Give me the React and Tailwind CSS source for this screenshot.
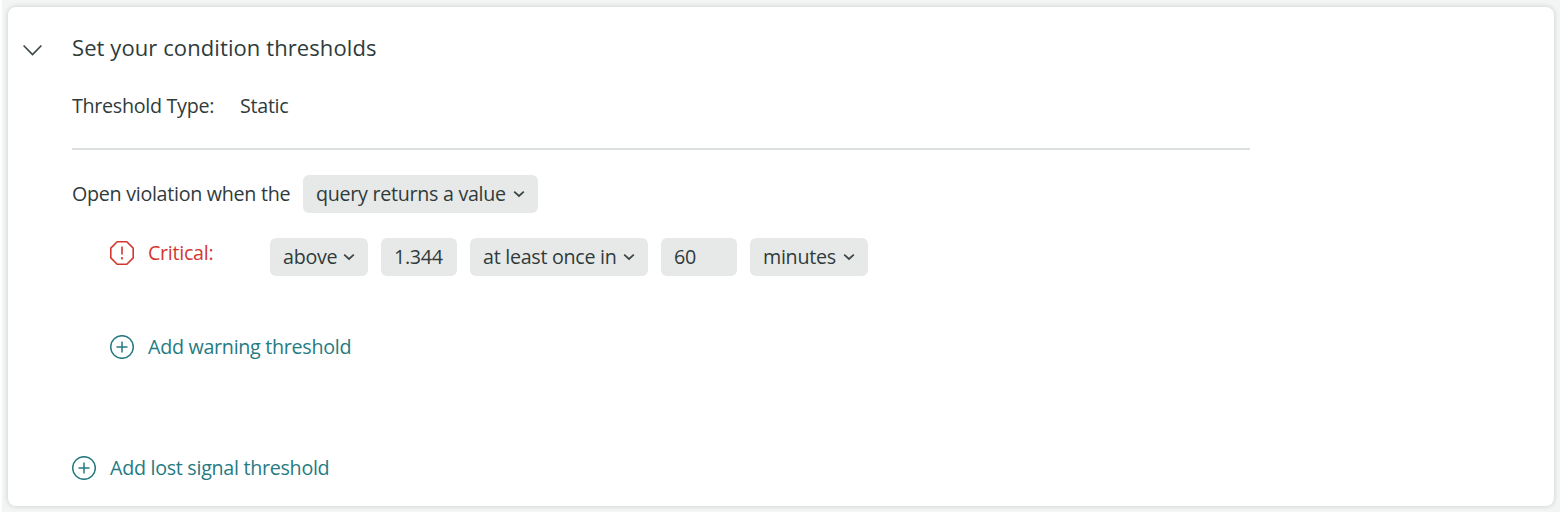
function Caret() {
  return (
    <svg className="h-2 w-3 shrink-0" viewBox="0 0 12 8" fill="none" stroke="#3a4444" strokeWidth="1.7">
      <path d="M1.200 1.700 6 6l4.800-4.300" />
    </svg>
  );
}

function Field({ text, width, caret }) {
  return (
    <div className={`flex h-[38px] shrink-0 items-center justify-between rounded-md bg-[#e7e9e8] pr-[13px] pl-[13px] ${width}`}>
      <span className="-mt-px">{text}</span>
      {caret && <Caret />}
    </div>
  );
}

function AddLink({ text }) {
  return (
    <button className="flex h-6 items-center gap-3.5 text-[#267a82]">
      <svg className="size-6 shrink-0" viewBox="0 0 24 24" fill="none" stroke="currentColor" strokeWidth="1.5">
        <circle cx="12" cy="12" r="11.300" />
        <path d="M12 6.500v11M6.500 12h11" />
      </svg>
      <span>{text}</span>
    </button>
  );
}

export default function App() {
  return (
    <div className="h-[512px] w-[1560px] overflow-hidden border-l-2 border-white bg-[#f3f5f5] pt-[7px] pl-1.5 font-['Open_Sans',sans-serif] text-[19.7px] leading-6 tracking-[-0.29px] whitespace-nowrap text-[#2f3b3b]">
      <main className="h-[499px] w-[1546px] rounded-lg bg-white pt-[28px] pl-16 shadow-[0_0_4px_1px_rgba(0,20,20,0.13)]">
        <header className="-ml-12 flex h-6 items-center">
          <svg className="mt-1.5 mr-[30px] -ml-px h-3 w-[19px]" viewBox="0 0 19 12" fill="none" stroke="#3a4444" strokeWidth="1.6">
            <path d="m.6 1.500 8.900 9 8.900-9" />
          </svg>
          <h1 className="text-[22px] tracking-[0.09px]">Set your condition thresholds</h1>
        </header>
        <div className="mt-[35px] flex h-6 items-center">
          <span className="w-[168px]">Threshold Type:</span>
          <span>Static</span>
        </div>
        <hr className="mt-[30px] h-0.5 w-[1178px] border-0 bg-[#dcdfdf]" />
        <div className="mt-[25px] flex h-[38px] items-center">
          <span className="-mt-px w-[231px]">Open violation when the</span>
          <Field text="query returns a value" width="w-[235px]" caret />
        </div>
        <div className="mt-[25px] flex h-[38px] gap-[13px] pl-[38px]">
          <div className="mt-[3px] mr-[9px] flex h-6 w-[138px] items-center text-[#d3382f]">
            <svg className="mr-3.5 size-6 shrink-0" viewBox="0 0 24 24" fill="none" stroke="currentColor" strokeWidth="1.6">
              <path d="M7.200.8h9.600l6.400 6.400v9.600l-6.400 6.400H7.200L.8 16.800V7.200ZM12 5.500v8M12 16v2.500" />
            </svg>
            <span>Critical:</span>
          </div>
          <Field text="above" width="w-[98px]" caret />
          <Field text="1.344" width="w-[76px]" />
          <Field text="at least once in" width="w-[178px]" caret />
          <Field text="60" width="w-[76px]" />
          <Field text="minutes" width="w-[118px]" caret />
        </div>
        <div className="mt-[59px] pl-[38px]">
          <AddLink text="Add warning threshold" />
        </div>
        <div className="mt-[97px]">
          <AddLink text="Add lost signal threshold" />
        </div>
      </main>
    </div>
  );
}
